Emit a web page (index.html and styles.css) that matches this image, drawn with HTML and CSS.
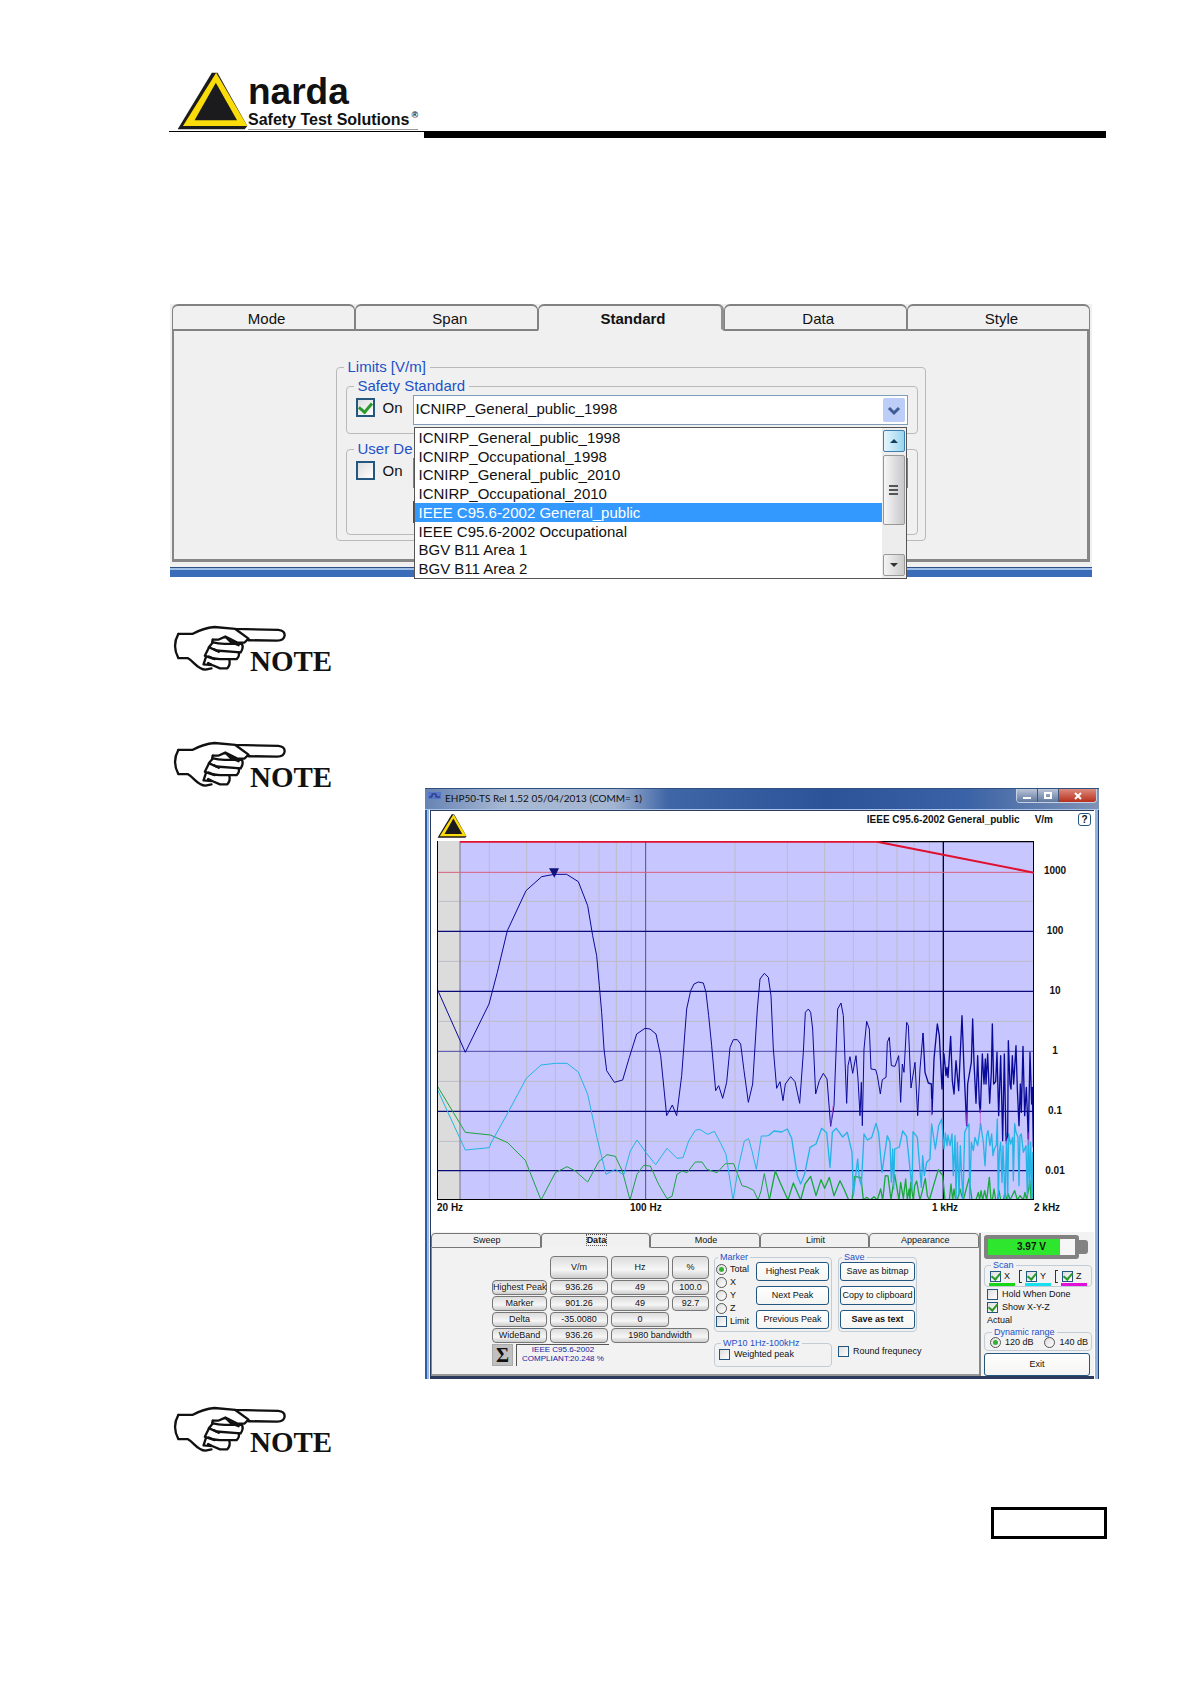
FILE: index.html
```html
<!DOCTYPE html>
<html lang="en">
<head>
<meta charset="utf-8">
<title>EHP50-TS manual page</title>
<link rel="stylesheet" href="styles.css">
</head>
<body>
<svg class="defs" aria-hidden="true">
  <symbol id="hand" viewBox="38 32 345 145">
    <g fill="none" stroke="#111" stroke-width="7" stroke-linejoin="round" stroke-linecap="round">
      <path d="M56 62H98Q132 44 165 41L228 47L358 50Q378 52 377 67Q375 82 355 82L268 81"/>
      <path d="M56 62Q36 98 56 135H84C106 147 112 168 138 170L156 166"/>
      <path d="M228 47L268 76L256 88L234 88L198 70L178 79H160M198 70L214 86L238 96"/>
      <path d="M160 79L158 87Q176 92 196 92H248Q254 104 244 118L170 112L148 102L160 88"/>
      <path d="M148 104L136 128Q162 140 190 138H232Q242 128 238 118"/>
      <path d="M140 130L132 154L158 156L182 166H204Q214 154 210 140M158 156L146 150M164 108L178 116M148 130L166 138"/>
    </g>
  </symbol>
  <symbol id="triangle" viewBox="50 36 214 174">
    <path d="M155 38L52 208H254L262 198L172 38Z" fill="#1b1a1c"/>
    <path d="M168 38L68 198H262Z" fill="#fadc0a"/>
    <path d="M167 68L103 181H231Z" fill="#1b1a1c"/>
  </symbol>
</svg>
<main class="page">
  <header class="header">
    <div class="brand">
      <svg class="brand-mark"><use href="#triangle"/></svg>
      <div class="brand-text">
        <div class="brand-name">narda</div>
        <div class="brand-sub">Safety Test Solutions<sup>®</sup></div>
      </div>
    </div>
    <div class="header-bar"></div>
  </header>

  <section class="settings">
    <div class="tabs tabs-large">
      <button class="tab">Mode</button>
      <button class="tab">Span</button>
      <button class="tab active">Standard</button>
      <button class="tab">Data</button>
      <button class="tab">Style</button>
    </div>
    <div class="settings-panel">
      <fieldset class="group limits">
        <legend>Limits [V/m]</legend>
        <fieldset class="group safety">
          <legend>Safety Standard</legend>
          <label class="check"><input type="checkbox" checked>On</label>
          <div class="combo">
            <select aria-label="Safety standard"><option>ICNIRP_General_public_1998</option></select>
            <svg class="combo-arrow" viewBox="0 0 22 24"><path d="M6 10l5 5 5-5" fill="none" stroke="#3f5c94" stroke-width="3"/></svg>
            <div class="popup">
              <ul class="options" role="listbox" aria-label="Standards">
                <li role="option">ICNIRP_General_public_1998</li>
                <li role="option">ICNIRP_Occupational_1998</li>
                <li role="option">ICNIRP_General_public_2010</li>
                <li role="option">ICNIRP_Occupational_2010</li>
                <li role="option" aria-selected="true">IEEE C95.6-2002 General_public</li>
                <li role="option">IEEE C95.6-2002 Occupational</li>
                <li role="option">BGV B11 Area 1</li>
                <li role="option">BGV B11 Area 2</li>
              </ul>
              <div class="scroll">
                <button class="scroll-btn hot" aria-label="Scroll up"><svg viewBox="0 0 10 6"><path d="M1 5L5 1L9 5Z" fill="#12405c"/></svg></button>
                <div class="thumb"><i></i><i></i><i></i></div>
                <button class="scroll-btn" aria-label="Scroll down"><svg viewBox="0 0 10 6"><path d="M1 1L5 5L9 1Z" fill="#333"/></svg></button>
              </div>
            </div>
          </div>
        </fieldset>
        <fieldset class="group user">
          <legend>User De</legend>
          <label class="check"><input type="checkbox">On</label>
          <div class="user-fields">
            <input type="text" aria-label="User defined limit">
            <button aria-label="Edit"></button>
          </div>
        </fieldset>
      </fieldset>
    </div>
    <div class="strip"></div>
  </section>

  <div class="note note-first"><svg><use href="#hand"/></svg><b>NOTE</b></div>
  <div class="note note-second"><svg><use href="#hand"/></svg><b>NOTE</b></div>

  <section class="window">
    <div class="titlebar">
      <svg class="app-icon" viewBox="0 0 13 7"><rect width="13" height="7" fill="#5575c8"/><path d="M1 5h3V2h4v3h4" fill="none" stroke="#1e2a6a"/></svg>
      <span class="title">EHP50-TS Rel 1.52 05/04/2013 (COMM= 1)</span>
      <div class="caption">
        <button aria-label="Minimize"><svg viewBox="0 0 10 8"><path d="M1 5h8v2H1z" fill="#fff"/></svg></button>
        <button aria-label="Maximize"><svg viewBox="0 0 10 8"><path d="M2 1h6v5H2z" fill="none" stroke="#fff" stroke-width="2"/></svg></button>
        <button class="close" aria-label="Close"><svg viewBox="0 0 10 8"><path d="M2 1l6 6M8 1l-6 6" stroke="#fff" stroke-width="2"/></svg></button>
      </div>
    </div>
    <div class="client">
      <div class="chart">
        <div class="chart-head">
          <svg class="chart-logo"><use href="#triangle"/></svg>
          <span class="chart-title">IEEE C95.6-2002 General_public</span>
          <span class="unit">V/m</span>
          <button class="help">?</button>
        </div>
        <div class="chart-body">
          <svg class="plot" viewBox="0 0 1791 1077" preserveAspectRatio="none">
            <rect width="1791" height="1077" fill="#c8c6ff"/>
            <rect width="69" height="1077" fill="#dcdcdc"/>
            <g stroke="#bdbcc8" stroke-width="3">
              <path d="M157 0V1077M269 0V1077M355 0V1077M426 0V1077M486 0V1077M538 0V1077M583 0V1077M894 0V1077M1051 0V1077M1163 0V1077M1249 0V1077M1320 0V1077M1380 0V1077M1431 0V1077M1477 0V1077"/>
              <path d="M0 181H1791M0 361H1791M0 541H1791M0 721H1791M0 901H1791"/>
            </g>
            <g stroke-width="3" fill="none">
              <path d="M69 0V1077" stroke="#77777f"/>
              <path d="M626 0V1077" stroke="#55556a"/>
              <path d="M1519 0V1077" stroke="#05052c" stroke-width="4"/>
              <path d="M0 271H1791M0 451H1791M0 811H1791M0 989H1791" stroke="#0b0b78" stroke-width="4"/>
              <path d="M0 631H1791" stroke="#4b4baa"/>
              <path d="M0 94H1791" stroke="#d8607c"/>
            </g>
            <g fill="none" stroke-width="3" stroke-linejoin="round">
              <path stroke="#1fa048" d="M1 735L85 874L160 882L212 905L265 958L312 1077L355 995L390 977L415 990L452 1023L485 962L510 941L535 946L556 990L579 1077L600 1000L620 973L640 975L665 1030L690 1073L705 1066L720 1000L735 990L750 995L775 963L795 963L810 985L840 995L865 968L890 968L915 1034L930 1038L950 1048L963 1077L972 1050L982 998L997 1077"/>
              <g transform="translate(969 504)" stroke-width="4">
                <path stroke="#1aa83c" d="M28 573L46 486L60 520L84 573L100 522L122 573L135 525L152 502L168 560L183 512L194 538L208 505L222 560L240 515L252 540L266 573L276 573L284 502L303 506L310 573L320 565L330 573L342 563L352 573L362 540L368 573L376 500L384 501L393 573L404 496L417 573L422 520L430 568L437 510L442 573L447 540L450 573L452 520L460 573L464 530L470 516L480 573L486 550L496 508L502 560L508 573L525 515L535 482L548 500L555 573L568 573L573 525L578 573L582 540L587 573L592 573L600 540L605 560L610 573L627 508L636 573L648 573L655 550L659 573L663 545L668 573L674 545L680 573L688 505L693 573L697 573L702 540L707 573L712 573L717 545L722 573L730 573L735 550L740 573L745 555L750 573L764 545L772 573L780 560L790 573L795 550L800 573L810 515L813 573L818 540L820 573"/>
                <path stroke="#24b4e6" d="M25 380L42 366L65 369L82 360L95 388L112 500L122 525L134 495L150 415L168 405L185 358L200 371L210 475L217 370L229 358L248 384L262 370L276 430L280 560L293 450L298 510L304 530L312 375L322 393L335 386L348 343L356 372L366 490L382 380L390 400L394 520L398 420L401 540L404 420L418 414L428 366L440 383L452 500L456 540L459 368L472 385L484 535L488 440L493 500L500 460L510 450L515 345L526 420L536 350L545 330L552 420L556 372L561 410L564 378L570 410L576 375L580 500L585 380L588 573L592 400L597 560L601 410L605 500L609 573L614 370L621 355L627 345L629 573L634 400L640 425L645 385L653 410L662 344L667 380L670 400L675 470L680 380L684 365L690 410L695 375L699 440L703 420L709 408L712 330L715 573L718 430L722 400L726 520L729 410L735 573L740 375L743 573L746 375L752 405L758 385L760 515L764 344L768 370L774 385L777 530L780 380L784 375L790 430L798 410L802 560L805 344L808 540L812 400L815 573L818 430L820 573"/>
              </g>
              <path stroke="#24b4e6" d="M1 745L85 927L157 920L162 906L210 820L268 712L312 672L355 667L390 667L424 693L452 760L480 890L507 1000L535 985L560 1002L580 930L600 897L627 935L656 971L690 922L720 952L738 950L755 900L775 868L788 865L812 880L832 871L850 905L867 940L888 1077L905 975L922 900L935 893L945 930L958 985L973 885L985 885L994 884"/>
              <g transform="translate(-51 504)" stroke="#0a0a98">
                <path d="M53 -57L136 130L207 -15L232 -110L262 -235L318 -355L365 -397L402 -404H440L475 -382L503 -310L518 -220L530 -160L538 -70L545 10L552 120L560 185L583 220L608 213L628 145L650 75L675 58L690 60L708 75L722 140L740 320L757 288L770 320L785 200L800 0L812 -55L822 -75L835 -81L850 -78L858 -50L866 20L875 110L887 245L896 230L908 268L920 220L930 115L940 92H952L962 105L972 185L985 280L998 225L1012 0L1020 -90L1033 -107L1045 -95L1053 -40"/>
              </g>
              <g transform="translate(969 504)">
                <path stroke="#0a0a98" d="M33 -40L40 120L50 238L60 218L69 275L76 225L92 203L105 218L119 283L130 130L136 10L145 0L152 10L158 60L167 255L178 215L190 193L201 210L212 352L222 290L233 0L243 -18L250 20L260 283L264 170L270 143L278 193L288 140L294 210L300 320L304 220L307 350L312 120L320 37L328 60L333 180L347 182L352 200L361 255L367 212L378 205L382 100L388 85L394 170L405 172L416 140L422 280L427 165L432 190L440 40L445 50L453 237L465 160L473 320L480 180L489 72"/>
                <path stroke="#0a0a98" stroke-width="4" d="M489 72L495 190L505 222L514 225L516 315L522 150L532 45L538 80L546 240L552 135L558 200L561 175L564 205L572 82L577 215L582 255L588 155L596 245L601 130L606 20L612 180L620 350L623 225L634 160L638 30L642 160L648 283L653 140L658 283L661 310L667 135L672 225L676 150L678 225L683 135L689 283L694 190L697 45L701 225L707 218L711 130L716 320L722 140L728 395L733 135L738 395L743 380L745 95L750 225L753 240L757 140L761 225L768 110L772 240L777 350L781 225L784 310L789 112L794 320L799 235L805 390L810 130L815 285L817 235L820 415"/>
                <path stroke="#c04ad0" stroke-width="2" d="M212 350L219 290M514 270V320M620 310V350M661 300V350M738 380V405M806 370V408"/>
              </g>
            </g>
            <path d="M336 82H366L352 110Z" fill="#12127c"/>
            <path d="M0 0V1077H1791V0" fill="none" stroke="#000" stroke-width="6"/>
            <path d="M1320 2H1791" stroke="#000" stroke-width="4"/>
            <path d="M69 2H1320L1791 95" fill="none" stroke="#e01030" stroke-width="6"/>
          </svg>
          <div class="y-axis"><span>1000</span><span>100</span><span>10</span><span>1</span><span>0.1</span><span>0.01</span></div>
        </div>
        <div class="x-axis"><span>20 Hz</span><span>100 Hz</span><span>1 kHz</span><span>2 kHz</span></div>
      </div>

      <div class="console">
        <div class="console-main">
          <div class="tabs tabs-small">
            <button class="tab">Sweep</button>
            <button class="tab active"><span class="focus">Data</span></button>
            <button class="tab">Mode</button>
            <button class="tab">Limit</button>
            <button class="tab">Appearance</button>
          </div>
          <div class="console-panel">
            <div class="readings">
              <table>
                <thead><tr><td class="blank"></td><th scope="col">V/m</th><th scope="col">Hz</th><th scope="col">%</th></tr></thead>
                <tbody>
                  <tr><th scope="row">Highest Peak</th><td>936.26</td><td>49</td><td>100.0</td></tr>
                  <tr><th scope="row">Marker</th><td>901.26</td><td>49</td><td>92.7</td></tr>
                  <tr><th scope="row">Delta</th><td>-35.0080</td><td>0</td><td class="blank"></td></tr>
                  <tr><th scope="row">WideBand</th><td>936.26</td><td colspan="2">1980 bandwidth</td></tr>
                </tbody>
              </table>
              <div class="verdict">
                <button class="sigma">Σ</button>
                <output>IEEE C95.6-2002<br>COMPLIANT:20.248 %</output>
              </div>
            </div>
            <div class="marker-col">
              <fieldset class="group marker">
                <legend>Marker</legend>
                <div class="choices">
                  <label class="check"><input type="radio" name="marker" checked>Total</label>
                  <label class="check"><input type="radio" name="marker">X</label>
                  <label class="check"><input type="radio" name="marker">Y</label>
                  <label class="check"><input type="radio" name="marker">Z</label>
                  <label class="check"><input type="checkbox">Limit</label>
                </div>
                <div class="actions">
                  <button class="btn">Highest Peak</button>
                  <button class="btn">Next Peak</button>
                  <button class="btn">Previous Peak</button>
                </div>
              </fieldset>
              <fieldset class="group weighted">
                <legend>WP10 1Hz-100kHz</legend>
                <label class="check"><input type="checkbox">Weighted peak</label>
              </fieldset>
            </div>
            <div class="save-col">
              <fieldset class="group save">
                <legend>Save</legend>
                <div class="actions">
                  <button class="btn">Save as bitmap</button>
                  <button class="btn">Copy to clipboard</button>
                  <button class="btn strong">Save as text</button>
                </div>
              </fieldset>
              <label class="check round"><input type="checkbox">Round frequnecy</label>
            </div>
          </div>
        </div>
        <aside class="side">
          <div class="battery"><div class="battery-body"><span>3.97 V</span></div><div class="battery-tip"></div></div>
          <fieldset class="group scan">
            <legend>Scan</legend>
            <label class="check axis-x"><input type="checkbox" checked>X</label>
            <i class="bracket"></i>
            <label class="check axis-y"><input type="checkbox" checked>Y</label>
            <i class="bracket"></i>
            <label class="check axis-z"><input type="checkbox" checked>Z</label>
          </fieldset>
          <div class="side-list">
            <label class="check"><input type="checkbox">Hold When Done</label>
            <label class="check"><input type="checkbox" checked>Show X-Y-Z</label>
            <span>Actual</span>
          </div>
          <fieldset class="group range">
            <legend>Dynamic range</legend>
            <label class="check"><input type="radio" name="range" checked>120 dB</label>
            <label class="check"><input type="radio" name="range">140 dB</label>
          </fieldset>
          <button class="btn exit">Exit</button>
        </aside>
      </div>
    </div>
  </section>

  <div class="note note-third"><svg><use href="#hand"/></svg><b>NOTE</b></div>
  <footer class="page-box"></footer>
</main>
</body>
</html>
```
FILE: styles.css
```css
* { box-sizing: border-box; }
body { margin: 0; background: #fff; color: #111; font-family: "Liberation Sans", Arial, sans-serif; }
button, select, input { font: inherit; color: inherit; margin: 0; }
button { padding: 0; }
.defs { position: absolute; width: 0; height: 0; }
.page { display: flex; flex-direction: column; padding: 72px 84px 142px 169px; }

/* header */
.header { display: flex; align-items: flex-end; }
.brand { display: flex; width: 255px; height: 60px; padding-left: 8px; margin-bottom: 6px; border-bottom: 1px solid #000; }
.brand-mark { width: 71px; height: 58px; }
.brand-text { width: 170px; padding-top: 2px; border-bottom: 1px solid #999; margin-bottom: 1px; white-space: nowrap; }
.brand-name { font-size: 37px; line-height: 36px; font-weight: bold; }
.brand-sub { font-size: 16px; line-height: 19px; font-weight: bold; }
.brand-sub sup { font-size: 9px; line-height: 8px; vertical-align: 7px; margin-left: 2px; }
.header-bar { flex: 1; height: 7px; background: #000; }

/* tabs */
.tabs { display: flex; }
.tab { flex: 1; background: #f0f0f0; border: 2px solid #828282; border-left-width: 1px; border-right-width: 1px; border-radius: 6px 6px 0 0; }
.tab.active { font-weight: bold; border-bottom-color: #f0f0f0; border-right: 3px solid #909090; }
.tabs-large .tab { height: 27px; padding: 1px 0 0 6px; font-size: 15px; }
.tabs-small .tab { height: 15px; padding-left: 2px; font-size: 9px; line-height: 11px; border-width: 1px; border-color: #777; border-radius: 4px 4px 0 0; }
.tabs-small .tab.active { border-bottom-color: #f2f2f2; }
.focus { outline: 1px dotted #555; }

/* grouped controls */
.group { min-width: 0; margin: 0; padding: 0; border: 1px solid #b9b9b9; border-radius: 4px; }
.group legend { color: #1d50c8; padding: 0 4px; }
.check { display: flex; align-items: center; white-space: nowrap; }
.check input { appearance: none; flex: none; display: grid; place-items: center; background: linear-gradient(135deg, #ddd, #fff); border: 1px solid #24577f; width: 11px; height: 11px; margin-right: 4px; }
.check input[type="radio"] { border-radius: 50%; border-color: #555; }
.check input[type="checkbox"]:checked::after { content: ""; width: 4px; height: 7px; border: solid #2a9a2a; border-width: 0 2px 2px 0; transform: translateY(-1px) rotate(40deg); }
.check input[type="radio"]:checked::after { content: ""; width: 5px; height: 5px; border-radius: 50%; background: #35b035; }

/* standard selection */
.settings { margin: 166px 14px 0 1px; padding: 0 2px; background: #f0f0f0; font-size: 15px; }
.settings-panel { margin-top: -1px; padding: 28px 0 22px; height: 232px; border: 2px solid #868686; border-width: 0 3px 3px 2px; }
.limits { width: 590px; max-width: 100%; margin: 0 auto; height: 183px; padding: 1px 7px 0 9px; }
.settings .group legend { line-height: 18px; padding: 0 4px; }
.limits > legend { margin-left: -2px; }
.settings .check { align-self: flex-start; width: 57px; margin-top: 3px; }
.settings .check input { width: 19px; height: 19px; margin-right: 8px; border-width: 2px; }
.settings .check input[type="checkbox"]:checked::after { width: 6px; height: 10px; border-width: 0 3px 3px 0; }
.safety, .user { display: flex; padding-left: 9px; padding-right: 9px; }
.safety legend, .user legend { margin-left: -2px; }
.safety { height: 57px; }
.user { height: 95px; margin-top: 6px; }
.combo { position: relative; flex: 1; height: 30px; }
.combo select { appearance: none; width: 100%; height: 30px; padding: 0 0 4px 2px; background: #fff; border: 1px solid #7f9db9; border-radius: 0; }
.combo-arrow { position: absolute; right: 3px; top: 3px; width: 22px; height: 24px; border-radius: 2px; background: #bccdf8; pointer-events: none; }
.popup { position: absolute; left: 1px; right: 1px; top: 32px; display: flex; height: 152px; background: #fff; border: 1px solid #555; z-index: 1; }
.options { flex: 1; margin: 0; padding: 0; list-style: none; display: grid; grid-auto-rows: 1fr; }
.options li { padding-left: 4px; display: flex; align-items: center; white-space: nowrap; }
.options [aria-selected="true"] { background: #3399ff; color: #fff; }
.scroll { width: 24px; padding: 2px 1px; display: flex; flex-direction: column; background: #ededed; }
.scroll-btn { height: 22px; display: grid; place-items: center; background: linear-gradient(90deg, #f4f4f4, #ccc); border: 1px solid #999; border-radius: 2px; }
.scroll-btn.hot { background: linear-gradient(90deg, #e6f6fd, #9bd4ee); border-color: #3c7fb1; }
.scroll-btn svg { width: 10px; height: 6px; }
.scroll-btn:last-child { margin-top: auto; }
.thumb { height: 70px; margin-top: 3px; display: flex; flex-direction: column; gap: 2px; align-items: center; justify-content: center; background: linear-gradient(90deg, #f6f6f6, #c8c8cc); border: 1px solid #979797; border-radius: 2px; }
.thumb i { width: 9px; height: 2px; background: #555; }
.user-fields { flex: 1; display: flex; flex-direction: column; gap: 13px; }
.user-fields input { height: 30px; border: 1px solid #5d85c0; background: #fff; }
.user-fields button { height: 22px; width: 100px; border: 1px solid #24577f; background: #fff; }
.strip { height: 10px; margin: 5px -2px 0; border: solid #2c5086; border-width: 1px 0 0; background: linear-gradient(#9fc0e6 2px, #3a6cba 2px); }

/* notes */
.note { display: flex; align-items: flex-end; height: 48px; padding-left: 3px; }
.note svg { width: 115px; height: 48px; flex: none; }
.note b { font: bold 29px/28px "Liberation Serif", serif; margin: 0 0 -3px -37px; }
.note-first { margin-top: 47px; }
.note-second { margin-top: 68px; }
.note-third { margin-top: 26px; }

/* application window */
.window { margin: 0 7px 0 256px; padding: 0 5px 3px 6px; font-size: 9px; line-height: 11px; background: linear-gradient(90deg, #2f5ea8 2px, #9dbce4 2px, #9dbce4 4px, #f4f8ff 4px, #f4f8ff 5px, #2d3b5c 5px, #2d3b5c calc(100% - 5px), #fff calc(100% - 5px), #fff calc(100% - 4px), #8fb2e0 calc(100% - 4px), #8fb2e0 calc(100% - 1px), #24406e calc(100% - 1px)); }
.titlebar { display: flex; align-items: flex-start; height: 22px; margin: 0 -5px 1px -6px; padding: 0 2px 0 3px; background: linear-gradient(90deg, #6683b4, #a9b9d4 12%, #a3b5d2 28%, #3f66a6 36%, #2c5298 60%, #3a62a6 80%, #7f93b5); border-bottom: 1px solid #a9c4ea; border-top: 1px solid #30517f; }
.app-icon { width: 13px; height: 7px; margin-top: 3px; }
.title { margin-left: 4px; font: 10px/18px Lato, "Open Sans", sans-serif; flex: 1; white-space: nowrap; }
.caption { display: flex; border: 1px solid #c5d2e6; border-top: 0; border-radius: 0 0 4px 4px; overflow: hidden; }
.caption button { width: 21px; height: 13px; border: 0; border-right: 1px solid #41597f; background: linear-gradient(#b9c4d8, #61789f); display: grid; place-items: center; }
.caption .close { width: 37px; border: 0; background: linear-gradient(#dc8a7c, #b82f1c); }
.caption svg { width: 10px; height: 8px; }
.client { background: #f2f2f2; }
.chart { background: #fff; padding-left: 6px; height: 421px; }
.chart-head { display: flex; height: 30px; padding: 2px 3px 0 0; font-size: 10px; font-weight: bold; }
.chart-logo { width: 30px; height: 24px; margin-top: 1px; }
.chart-title { margin-left: auto; line-height: 14px; }
.unit { margin: 0 25px 0 15px; line-height: 14px; }
.help { width: 13px; height: 13px; line-height: 10px; border: 1px solid #24577f; border-radius: 3px; background: #fff; font-weight: bold; }
.chart-body { display: flex; height: 359px; }
.plot { flex: 1; min-width: 0; height: 359px; }
.y-axis { width: 60px; padding-right: 18px; display: flex; flex-direction: column; text-align: center; font: bold 10px/60px "Liberation Sans", sans-serif; }
.x-axis { display: grid; grid-template-columns: 193fr 302fr 102fr 60px; font: bold 10px/16px "Liberation Sans", sans-serif; white-space: nowrap; }

/* lower console */
.console { display: flex; gap: 3px; padding: 1px 2px 0 0; }
.console-main { flex: 1; min-width: 0; border-right: 2px solid #888; }
.console-panel { display: flex; height: 128px; padding: 4px 0 0 57px; border-bottom: 2px solid #999; border-left: 1px solid #888; }
.readings { width: 225px; }
table { border-collapse: separate; border-spacing: 3px 1px; table-layout: fixed; width: 223px; margin-top: 3px; }
td, th { height: 15px; padding: 0; text-align: center; font-weight: normal; line-height: 11px; border: 1px solid #777; border-radius: 4px; background: linear-gradient(#dcdcdc, #f6f6f6 60%, #ccc); white-space: nowrap; }
th:first-child, td:first-child { width: 55px; }
thead th { height: 23px; width: 58px; }
thead th:last-child { width: 37px; }
td.blank { border: 0; background: none; }
.verdict { display: flex; gap: 3px; margin-left: 3px; }
.sigma { width: 21px; height: 22px; border: 1px solid #aaa; background: #bfbfbf; font: bold 20px/20px "Liberation Serif", serif; }
.verdict output { width: 93px; border: solid #555; border-width: 1px 0 0 1px; text-align: center; font-size: 8px; line-height: 9px; color: #1a1aa0; white-space: nowrap; }
.console .group { border-color: #c2ccd6; }
.console .group legend { line-height: 10px; margin-left: 2px; padding: 0 2px; }
.marker-col { width: 118px; }
.marker { display: flex; height: 80px; padding: 0 2px 0 1px; }
.choices { flex: 1; padding-top: 1px; }
.choices .check { height: 13px; }
.choices .check input { margin-right: 3px; }
.actions { width: 73px; display: flex; flex-direction: column; gap: 5px; }
.btn { height: 19px; border: 1px solid #24577f; border-radius: 3px; background: linear-gradient(#fff, #f4f4f2); white-space: nowrap; }
.strong { font-weight: bold; }
.weighted { margin-top: 6px; height: 29px; padding-left: 4px; }
.weighted .check { height: 13px; }
.save-col { width: 79px; margin-left: 6px; }
.save { height: 80px; padding: 0 1px; }
.save .actions { width: 100%; }
.round { margin-top: 14px; }
.side { width: 108px; display: flex; flex-direction: column; }
.battery { display: flex; align-items: center; height: 24px; margin-top: 2px; }
.battery-body { width: 95px; height: 24px; border: 4px solid #828282; border-radius: 3px; background: linear-gradient(90deg, #2ee62e 83%, #f6f6f6 83%); text-align: center; font: bold 10px/16px "Liberation Sans", sans-serif; }
.battery-tip { width: 9px; height: 14px; background: #828282; border-radius: 0 3px 3px 0; }
.scan { display: flex; height: 27px; padding: 0 4px; margin-top: 1px; justify-content: space-between; }
.scan .check { width: 26px; height: 16px; padding-bottom: 1px; border-bottom: 3px solid; }
.scan .axis-x { border-color: #16d616; }
.scan .axis-y { border-color: #16dfee; }
.scan .axis-z { border-color: #e010d8; }
.scan .check input { margin-left: 1px; margin-right: 3px; }
.bracket { width: 3px; height: 13px; border: solid #333; border-width: 1px 0 1px 1px; }
.side-list { padding: 0 0 0 3px; display: flex; flex-direction: column; gap: 1px; line-height: 12px; margin-top: 1px; }
.range { display: flex; justify-content: space-between; height: 24px; padding: 0 3px 0 5px; margin-top: 1px; }
.exit { height: 23px; margin: 2px 2px 0 0; }

.page-box { align-self: flex-end; width: 116px; height: 32px; margin: 54px -1px 0 0; border: 3px solid #000; }

@media (max-width: 1000px) {
  .page { padding-left: 24px; padding-right: 24px; }
  .window { margin-left: 0; }
}
```
